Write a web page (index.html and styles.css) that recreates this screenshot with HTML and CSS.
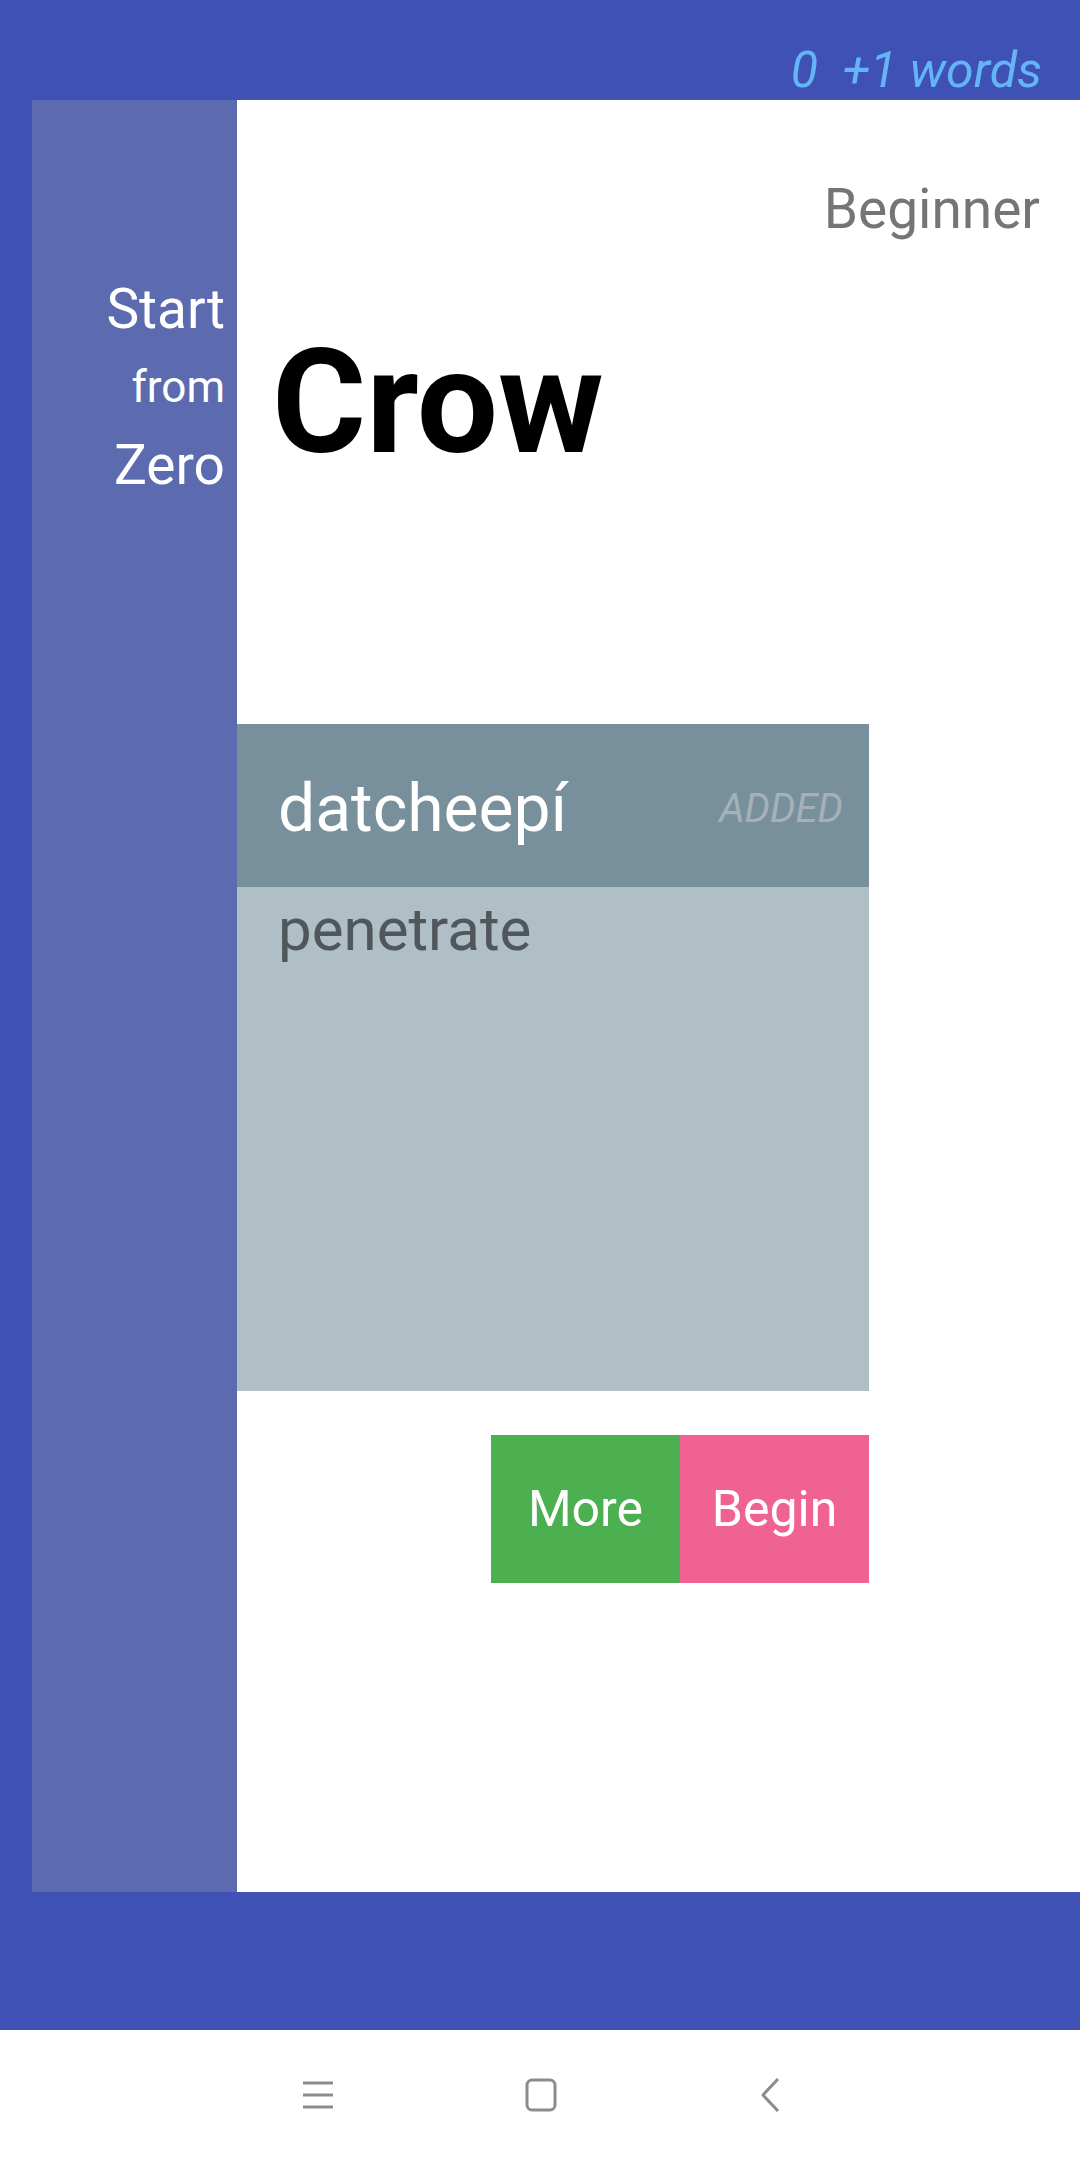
FILE: index.html
```html
<!DOCTYPE html>
<html>
<head>
<meta charset="utf-8">
<link rel="stylesheet" href="styles.css">
</head>
<body>
<div class="screen">
  <header class="topbar"><span class="count">0  +1 words</span></header>
  <div class="panel">
    <aside class="sidebar">
      <div class="side-big">Start</div>
      <div class="side-small">from</div>
      <div class="side-big">Zero</div>
    </aside>
    <main class="content">
      <div class="level">Beginner</div>
      <h1 class="title">Crow</h1>
      <section class="card">
        <div class="card-head">
          <span class="word">datcheepí</span>
          <span class="added">ADDED</span>
        </div>
        <div class="card-body">
          <span class="meaning">penetrate</span>
        </div>
      </section>
      <div class="actions">
        <button class="btn btn-more">More</button>
        <button class="btn btn-begin">Begin</button>
      </div>
    </main>
  </div>
  <div class="bottom-strip"></div>
  <nav class="navbar">
    <svg class="nav-icon" width="32" height="30" viewBox="0 0 32 30"><g stroke="#8c8c8c" stroke-width="3" fill="none"><line x1="1" y1="3" x2="31" y2="3"/><line x1="1" y1="15" x2="31" y2="15"/><line x1="1" y1="27" x2="31" y2="27"/></g></svg>
    <svg class="nav-icon" width="32" height="34" viewBox="0 0 32 34"><rect x="2" y="2" width="28" height="30" rx="5" ry="5" stroke="#8c8c8c" stroke-width="3" fill="none"/></svg>
    <svg class="nav-icon" width="20" height="34" viewBox="0 0 20 34"><polyline points="18,1 3,17 18,33" stroke="#8c8c8c" stroke-width="3" fill="none" stroke-linejoin="round"/></svg>
  </nav>
</div>
</body>
</html>
```
FILE: styles.css
```css
html, body {
  margin: 0;
  padding: 0;
}
body {
  width: 1080px;
  height: 2160px;
  font-family: Roboto, "Liberation Sans", sans-serif;
  overflow: hidden;
}
.screen {
  width: 1080px;
  height: 2160px;
  display: flex;
  flex-direction: column;
  background: #3f51b5;
}
.topbar {
  height: 100px;
  box-sizing: border-box;
  padding: 45px 38px 0 0;
  text-align: right;
}
.count {
  font-size: 50px;
  line-height: 50px;
  font-style: italic;
  color: #64b5f6;
  white-space: pre;
}
.panel {
  height: 1792px;
  margin-left: 32px;
  display: flex;
  background: #ffffff;
}
.sidebar {
  width: 205px;
  flex: none;
  background: #5c6bb0;
  box-sizing: border-box;
  padding: 170px 12px 0 0;
  text-align: right;
  color: #ffffff;
}
.side-big {
  font-size: 55px;
  line-height: 78px;
}
.side-small {
  font-size: 44px;
  line-height: 78px;
}
.content {
  flex: 1;
  display: flex;
  flex-direction: column;
}
.level {
  margin-top: 82px;
  padding-right: 40px;
  text-align: right;
  font-size: 55px;
  line-height: 55px;
  color: #757575;
}
.title {
  margin: 94px 0 0 0;
  padding-left: 35px;
  font-size: 144px;
  line-height: 144px;
  font-weight: 700;
  color: #000000;
}
.card {
  margin-top: 249px;
  width: 632px;
}
.card-head {
  height: 163px;
  box-sizing: border-box;
  padding: 6px 26px 0 41px;
  background: #78909c;
  display: flex;
  align-items: center;
  justify-content: space-between;
}
.word {
  font-size: 66px;
  line-height: 66px;
  color: #ffffff;
}
.added {
  font-size: 40px;
  line-height: 40px;
  font-style: italic;
  color: #a5b1b8;
}
.card-body {
  height: 504px;
  box-sizing: border-box;
  padding: 13px 0 0 41px;
  background: #b0bec5;
}
.meaning {
  display: block;
  font-size: 60px;
  line-height: 60px;
  color: #50575b;
}
.actions {
  width: 632px;
  margin-top: 44px;
  display: flex;
  justify-content: flex-end;
}
.btn {
  width: 189px;
  height: 148px;
  border: 0;
  padding: 0;
  margin: 0;
  font-family: Roboto, "Liberation Sans", sans-serif;
  font-size: 50px;
  color: #ffffff;
}
.btn-more {
  background: #4caf50;
}
.btn-begin {
  background: #f06292;
}
.bottom-strip {
  height: 138px;
}
.navbar {
  height: 130px;
  background: #ffffff;
  display: flex;
  align-items: center;
  padding-left: 302px;
}
.nav-icon:nth-child(1) {
  margin-right: 191px;
}
.nav-icon:nth-child(2) {
  margin-right: 203px;
}
```
